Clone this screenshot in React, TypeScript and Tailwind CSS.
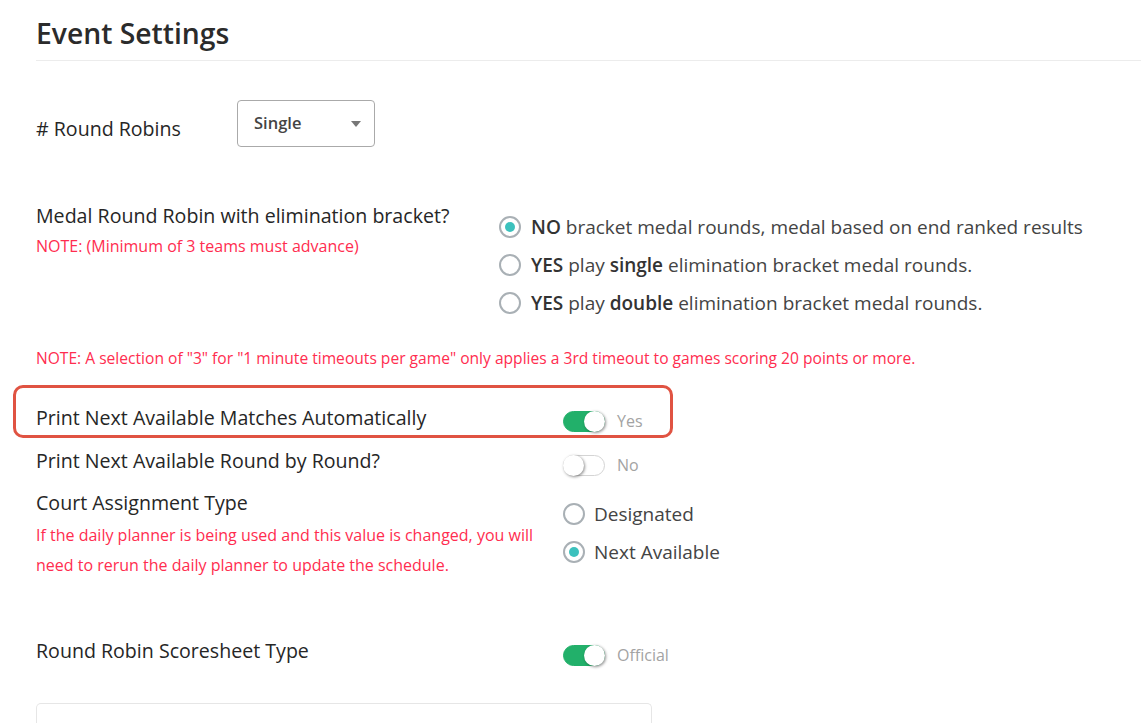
import { useState } from 'react';

const FONT = { fontFamily: '"Open Sans", "Noto Sans", sans-serif' };

function Toggle({ on, label }: { on: boolean; label: string }) {
  return (
    <div className="flex h-[21px] items-center gap-3">
      <div
        className={`relative h-[21px] w-[42px] rounded-full border ${
          on ? 'border-[#22b06a] bg-[#22b06a]' : 'border-[#d4d4d4] bg-white'
        }`}
      >
        <div
          className={`absolute top-[-1px] h-[21px] w-[21px] rounded-full bg-white shadow-[1px_1px_3px_rgba(0,0,0,0.45)] ${
            on ? 'right-[-1px]' : 'left-[-1px]'
          }`}
        />
      </div>
      <span className="text-[16px] leading-[21px] text-[#a3a3a3]">{label}</span>
    </div>
  );
}

function Radio({ checked }: { checked: boolean }) {
  return (
    <span className="flex h-[22px] w-[22px] shrink-0 items-center justify-center rounded-full border-2 border-[#a9b0b5] bg-white">
      {checked && <span className="h-[10px] w-[10px] rounded-full bg-[#3cc1bd]" />}
    </span>
  );
}

const LABEL = 'text-[19.6px] leading-[26px] font-medium text-[#262626]';
const NOTE = 'text-[16px] text-[#ff2d4f]';

export default function App() {
  const [bracket] = useState(0);
  const [court] = useState(1);

  return (
    <div className="min-h-screen overflow-hidden bg-white pl-9 text-[#333]" style={FONT}>
      <h1 className="pt-[14px] text-[28.3px] leading-[38px] font-semibold text-[#2b2b2b]">Event Settings</h1>
      <div className="mt-[8px] h-px bg-[#ececec]" />

      <div className="mt-[39px] flex items-start">
        <div className={`mt-[16px] w-[201px] ${LABEL}`}># Round Robins</div>
        <div className="flex h-[47px] w-[138px] items-center justify-between rounded-[4px] border border-[#aaa] pl-4 pr-[13px]">
          <span className="text-[16.5px] font-semibold text-[#444]">Single</span>
          <span className="h-0 w-0 border-x-[5px] border-t-[6px] border-x-transparent border-t-[#777]" />
        </div>
      </div>

      <div className="mt-[56px] flex items-start">
        <div className="w-[463px]">
          <div className={LABEL}>Medal Round Robin with elimination bracket?</div>
          <div className={`mt-[6px] leading-[22px] ${NOTE}`}>NOTE: (Minimum of 3 teams must advance)</div>
        </div>
        <div className="mt-[11px] flex flex-col gap-[12px] text-[19px] leading-[26px] text-[#444]">
          <label className="flex items-center gap-[10px]">
            <Radio checked={bracket === 0} />
            <span>
              <b className="font-semibold text-[#333]">NO</b> bracket medal rounds, medal based on end ranked results
            </span>
          </label>
          <label className="flex items-center gap-[10px]">
            <Radio checked={bracket === 1} />
            <span>
              <b className="font-semibold text-[#333]">YES</b> play <b className="font-semibold text-[#333]">single</b>{' '}
              elimination bracket medal rounds.
            </span>
          </label>
          <label className="flex items-center gap-[10px]">
            <Radio checked={bracket === 2} />
            <span>
              <b className="font-semibold text-[#333]">YES</b> play <b className="font-semibold text-[#333]">double</b>{' '}
              elimination bracket medal rounds.
            </span>
          </label>
        </div>
      </div>

      <div className="mt-[31px] text-[15.6px] leading-[22px] text-[#ff2d4f]">
        NOTE: A selection of "3" for "1 minute timeouts per game" only applies a 3rd timeout to games scoring 20 points or more.
      </div>

      <div className="relative mt-[16px]">
        <div className="pointer-events-none absolute left-[-23px] top-0 h-[53px] w-[660px] rounded-[10px] border-[3px] border-[#e05342]" />
        <div className="flex items-start pt-[20px]">
          <div className={`w-[527px] ${LABEL}`}>Print Next Available Matches Automatically</div>
          <div className="mt-[6px]">
            <Toggle on label="Yes" />
          </div>
        </div>
      </div>

      <div className="mt-[16px] flex items-start">
        <div className={`w-[527px] ${LABEL}`}>Print Next Available Round by Round?</div>
        <div className="mt-[7px]">
          <Toggle on={false} label="No" />
        </div>
      </div>

      <div className="mt-[14px] flex items-start">
        <div className="w-[527px]">
          <div className={LABEL}>Court Assignment Type</div>
          <div className={`mt-[4px] leading-[30px] ${NOTE}`}>
            If the daily planner is being used and this value is changed, you will
            <br />
            need to rerun the daily planner to update the schedule.
          </div>
        </div>
        <div className="mt-[11px] flex flex-col gap-[12px] text-[19px] leading-[26px] text-[#444]">
          <label className="flex items-center gap-[9px]">
            <Radio checked={court === 0} />
            <span>Designated</span>
          </label>
          <label className="flex items-center gap-[9px]">
            <Radio checked={court === 1} />
            <span>Next Available</span>
          </label>
        </div>
      </div>

      <div className="mt-[58px] flex items-start">
        <div className={`w-[527px] ${LABEL}`}>Round Robin Scoresheet Type</div>
        <div className="mt-[7px]">
          <Toggle on label="Official" />
        </div>
      </div>

      <div className="mt-[37px] h-[40px] w-[616px] rounded-t-[5px] border border-b-0 border-[#e6e6e6]" />
    </div>
  );
}
